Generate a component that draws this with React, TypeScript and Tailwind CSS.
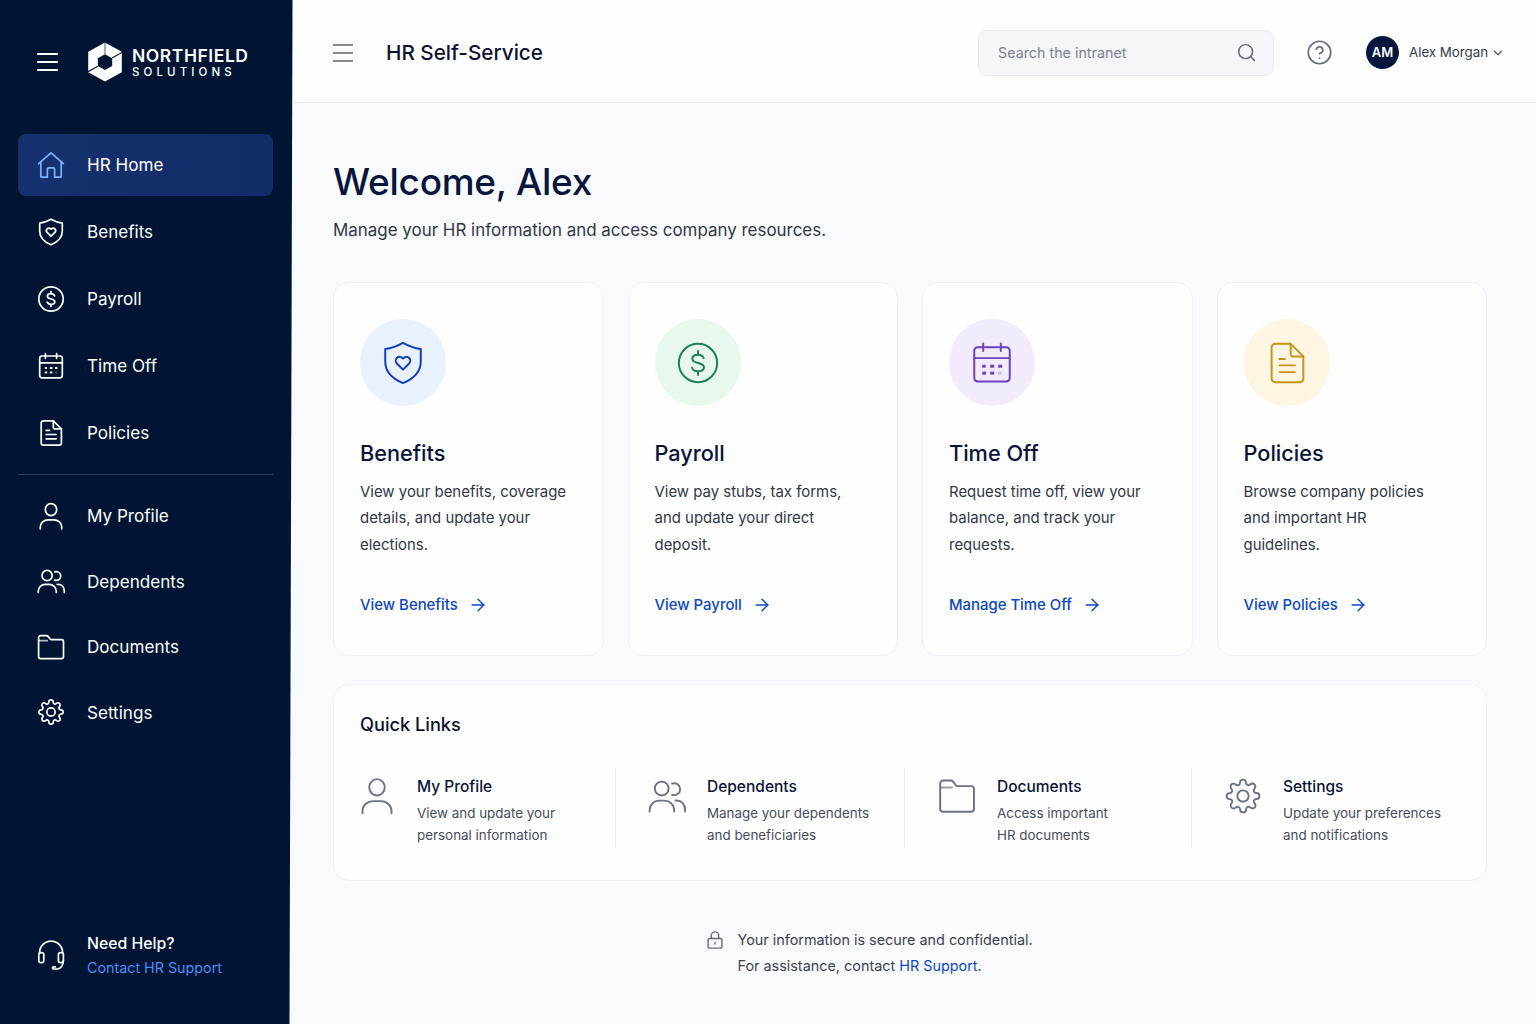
import type { ReactNode } from 'react'
import { ArrowRight, ChevronDown, CircleQuestionMark, Search } from 'lucide-react'

type IconProps = { className?: string; strokeWidth?: number }

function Icon({ className = 'size-7', strokeWidth = 1.7, children }: IconProps & { children: ReactNode }) {
  return (
    <svg
      viewBox="0 0 28 28"
      fill="none"
      stroke="currentColor"
      strokeWidth={strokeWidth}
      strokeLinecap="round"
      strokeLinejoin="round"
      className={`shrink-0 overflow-visible ${className}`}
    >
      {children}
    </svg>
  )
}

const HomeIcon = (props: IconProps) => (
  <Icon {...props}>
    <path d="M1.6 12.7 14 1.9l12.4 10.8" />
    <path d="M3.8 11v14.2a1 1 0 0 0 1 1h5.6v-8a1.4 1.4 0 0 1 1.4-1.4h4.4a1.4 1.4 0 0 1 1.4 1.4v8h5.6a1 1 0 0 0 1-1V11" />
  </Icon>
)

const ShieldIcon = (props: IconProps) => (
  <Icon {...props}>
    <path d="M14 1.2C10.5 3.2 6.5 4.6 2.7 5.1V13c0 6.5 4.6 11 11.3 13.8C20.7 24 25.3 19.5 25.3 13V5.1C21.5 4.6 17.5 3.2 14 1.2Z" />
    <path d="m14 18.2-3.9-3.9a2.5 2.5 0 0 1 0-3.5 2.4 2.4 0 0 1 3.5 0l.4.4.4-.4a2.4 2.4 0 0 1 3.5 0 2.5 2.5 0 0 1 0 3.5Z" />
  </Icon>
)

const DollarIcon = (props: IconProps) => (
  <Icon {...props}>
    <circle cx="14" cy="14" r="12.2" />
    <path d="M17.6 10.9c-.5-1.4-1.8-2.2-3.6-2.2-2.1 0-3.6 1-3.6 2.6 0 3.7 7.4 1.7 7.4 5.4 0 1.6-1.6 2.6-3.8 2.6-1.9 0-3.3-.8-3.8-2.3M14 6.4v2.3M14 19.3v2.3" />
  </Icon>
)

const CalendarIcon = (props: IconProps) => (
  <Icon {...props}>
    <rect x="2.7" y="4" width="22.6" height="21.8" rx="2.2" />
    <path d="M2.7 10.9h22.6M8.4 1.5v4.8M19.6 1.5v4.8" />
    <g fill="currentColor" stroke="none">
      <rect x="7.8" y="15.1" width="2.2" height="1.9" />
      <rect x="12.8" y="15.1" width="2.6" height="1.9" />
      <rect x="17.9" y="15.1" width="2.6" height="1.9" />
      <rect x="7.8" y="19.5" width="2.4" height="1.9" />
      <rect x="12.8" y="19.5" width="2.6" height="1.9" />
      <rect x="17.9" y="19.5" width="2.2" height="1.9" opacity="0.3" />
    </g>
  </Icon>
)

const DocumentIcon = (props: IconProps) => (
  <Icon {...props}>
    <path d="M16.3 1.8H6.4a2.2 2.2 0 0 0-2.2 2.2v20a2.2 2.2 0 0 0 2.2 2.2h15.8a2.2 2.2 0 0 0 2.2-2.2V9.8Z" />
    <path d="M16.3 1.8v6.8a1.2 1.2 0 0 0 1.2 1.2h6.9M9.2 11.4h3.4M9.2 15.5h9.9M9.2 19.8h9.9" />
  </Icon>
)

const UserIcon = (props: IconProps) => (
  <Icon {...props}>
    <ellipse cx="14" cy="7.6" rx="5.7" ry="6" />
    <path d="M3.3 26.8v-1.5c0-4.3 3.4-7.5 8-7.5h5.4c4.6 0 8 3.2 8 7.5v1.5" />
  </Icon>
)

const UsersIcon = (props: IconProps) => (
  <Icon {...props}>
    <circle cx="10.1" cy="8.5" r="5.1" />
    <path d="M1.2 25.5v-.9c0-4.2 3.2-7.2 7.2-7.2H12c4 0 7.3 3 7.3 7.2v.9" />
    <path d="M17.7 4.9c.5-.2 1-.3 1.6-.3a4.3 4.3 0 0 1 0 8.8c-.6 0-1.1-.1-1.6-.3M20.2 17.3h.9c3.7 0 6.2 2.9 6.2 6.6v1.6" />
  </Icon>
)

const FolderIcon = (props: IconProps) => (
  <Icon {...props}>
    <path d="M1.6 23.4V4.8a2.2 2.2 0 0 1 2.2-2.2h5.7c.7 0 1.2.3 1.6.8l2 2.7c.3.4.7.6 1.2.6h10.2a2 2 0 0 1 2 2v14.7a2.2 2.2 0 0 1-2.2 2.2H3.8a2.2 2.2 0 0 1-2.2-2.2Z" />
    <path d="M2 7.7h8.3" opacity="0.7" />
  </Icon>
)

const GearIcon = ({ className, strokeWidth = 1.7 }: IconProps) => (
  <Icon className={className} strokeWidth={strokeWidth * 0.91}>
    <g transform="translate(.8 .8) scale(1.1)">
      <circle cx="12" cy="12" r="3.8" />
      <path d="M19.4 15a1.65 1.65 0 0 0 .33 1.82l.06.06a2 2 0 0 1 0 2.83 2 2 0 0 1-2.83 0l-.06-.06a1.65 1.65 0 0 0-1.82-.33 1.65 1.65 0 0 0-1 1.51V21a2 2 0 0 1-2 2 2 2 0 0 1-2-2v-.09A1.65 1.65 0 0 0 9 19.4a1.65 1.65 0 0 0-1.82.33l-.06.06a2 2 0 0 1-2.83 0 2 2 0 0 1 0-2.83l.06-.06a1.65 1.65 0 0 0 .33-1.82 1.65 1.65 0 0 0-1.51-1H3a2 2 0 0 1-2-2 2 2 0 0 1 2-2h.09A1.65 1.65 0 0 0 4.6 9a1.65 1.65 0 0 0-.33-1.82l-.06-.06a2 2 0 0 1 0-2.83 2 2 0 0 1 2.83 0l.06.06a1.65 1.65 0 0 0 1.82.33H9a1.65 1.65 0 0 0 1-1.51V3a2 2 0 0 1 2-2 2 2 0 0 1 2 2v.09a1.65 1.65 0 0 0 1 1.51 1.65 1.65 0 0 0 1.82-.33l.06-.06a2 2 0 0 1 2.83 0 2 2 0 0 1 0 2.83l-.06.06a1.65 1.65 0 0 0-.33 1.82V9a1.65 1.65 0 0 0 1.51 1H21a2 2 0 0 1 2 2 2 2 0 0 1-2 2h-.09a1.65 1.65 0 0 0-1.51 1z" />
    </g>
  </Icon>
)

const HeadsetIcon = (props: IconProps) => (
  <Icon {...props}>
    <path d="M2.6 12v-.4a11.5 11.5 0 0 1 23 0v.4" />
    <rect x="1.8" y="11.6" width="5" height="10" rx="2.1" />
    <rect x="21.4" y="11.6" width="5" height="10" rx="2.1" />
    <path d="M26.2 19.8c0 4.8-2.6 8-6.2 8.2h-3.4a1.1 1.1 0 0 1 0-2.2h1.8" />
  </Icon>
)

const LockIcon = (props: IconProps) => (
  <Icon {...props}>
    <rect x="3.2" y="11.6" width="21.6" height="15" rx="3" />
    <path d="M8.2 11.6V7.2a5.8 5.8 0 0 1 11.6 0v4.4M14 18v2.4" />
  </Icon>
)

function LogoMark() {
  return (
    <svg viewBox="0 0 34 40" className="h-10 w-[34px] shrink-0">
      <path
        fill="#fff"
        fillRule="evenodd"
        d="M17 .4 33.8 9.8v20.4L17 39.6.2 30.2V9.8ZM17 12.2l-7.2 4.1v7.6l7.2 4.1 7.2-4.1v-7.6Z"
      />
      <path d="M24.2 16 34 10.4M9.8 24.2 0 29.8" stroke="#001434" strokeWidth="1.2" />
      <path d="M17 .4v11.8" stroke="#001434" strokeWidth="0.7" />
    </svg>
  )
}

const primaryNav = [
  { label: 'HR Home', icon: HomeIcon, active: true },
  { label: 'Benefits', icon: ShieldIcon },
  { label: 'Payroll', icon: DollarIcon },
  { label: 'Time Off', icon: CalendarIcon },
  { label: 'Policies', icon: DocumentIcon },
]

const secondaryNav = [
  { label: 'My Profile', icon: UserIcon },
  { label: 'Dependents', icon: UsersIcon },
  { label: 'Documents', icon: FolderIcon },
  { label: 'Settings', icon: GearIcon },
]

const cards = [
  {
    title: 'Benefits',
    lines: ['View your benefits, coverage', 'details, and update your', 'elections.'],
    link: 'View Benefits',
    icon: ShieldIcon,
    tone: 'bg-[#eaf1fe] text-[#0f3fb5]',
  },
  {
    title: 'Payroll',
    lines: ['View pay stubs, tax forms,', 'and update your direct', 'deposit.'],
    link: 'View Payroll',
    icon: DollarIcon,
    tone: 'bg-[#e9f8ec] text-[#1d7f57]',
  },
  {
    title: 'Time Off',
    lines: ['Request time off, view your', 'balance, and track your', 'requests.'],
    link: 'Manage Time Off',
    icon: CalendarIcon,
    tone: 'bg-[#f2ebfd] text-[#6a42bd]',
  },
  {
    title: 'Policies',
    lines: ['Browse company policies', 'and important HR', 'guidelines.'],
    link: 'View Policies',
    icon: DocumentIcon,
    tone: 'bg-[#fdf6e3] text-[#c7931a]',
  },
]

const quickLinks = [
  { title: 'My Profile', lines: ['View and update your', 'personal information'], icon: UserIcon, cell: '' },
  {
    title: 'Dependents',
    lines: ['Manage your dependents', 'and beneficiaries'],
    icon: UsersIcon,
    cell: 'border-l pl-[34px]',
  },
  {
    title: 'Documents',
    lines: ['Access important', 'HR documents'],
    icon: FolderIcon,
    cell: 'border-l pl-[35px]',
  },
  {
    title: 'Settings',
    lines: ['Update your preferences', 'and notifications'],
    icon: GearIcon,
    cell: 'border-l pl-[34px]',
  },
]

function Sidebar() {
  return (
    <aside className="flex w-[293px] shrink-0 flex-col bg-[#001434] text-white [clip-path:polygon(0_0,292.5px_0,289.5px_100%,0_100%)]">
      <div className="flex h-[123px] items-center pl-[37px]">
        <button className="flex w-[21px] flex-col gap-[6px]">
          <span className="h-[2px] rounded-full bg-white" />
          <span className="h-[2px] rounded-full bg-white" />
          <span className="h-[2px] rounded-full bg-white" />
        </button>
        <div className="ml-[30px] flex items-center gap-[10px]">
          <LogoMark />
          <div className="pt-[2px]">
            <div className="text-[17.5px] leading-[19px] font-semibold tracking-[0.55px]">NORTHFIELD</div>
            <div className="text-[11.5px] leading-[15px] font-medium tracking-[4.1px]">SOLUTIONS</div>
          </div>
        </div>
      </div>

      <nav className="mt-[11px] flex flex-col gap-[5.5px] px-[18px]">
        {primaryNav.map(({ label, icon: NavIcon, active }) => (
          <a
            key={label}
            className={`flex h-[61.5px] w-[255px] items-center gap-[22px] rounded-lg pl-[19px] text-[17.1px] ${
              active ? 'bg-linear-to-r from-[#15316f] to-[#112c66]' : ''
            }`}
          >
            <NavIcon className={active ? 'size-7 text-[#79b4fb]' : 'size-7'} />
            <span className="pt-[0.5px]">{label}</span>
          </a>
        ))}
      </nav>

      <hr className="mt-[10.5px] ml-[18px] w-[255px] border-t-[1.5px] border-[#2f405c]" />

      <nav className="mt-[8px] px-[18px]">
        {secondaryNav.map(({ label, icon: NavIcon }) => (
          <a key={label} className="flex h-[65.5px] items-center gap-[22px] pl-[19px] text-[17.1px]">
            <NavIcon />
            <span className="pt-[0.5px]">{label}</span>
          </a>
        ))}
      </nav>

      <div className="mt-auto flex items-center gap-[22px] pb-[44px] pl-[37px]">
        <HeadsetIcon className="mb-[2px] size-7" />
        <div>
          <div className="text-[15.8px] leading-6 font-medium">Need Help?</div>
          <a className="block text-[14.3px] leading-6 text-[#4b8df8]">Contact HR Support</a>
        </div>
      </div>
    </aside>
  )
}

function Header() {
  return (
    <header className="flex h-[103px] items-center border-b border-[#e6e9f0] bg-[#fefefe] pt-[3px] pl-[40px]">
      <button className="flex w-[20px] flex-col gap-[6px] pt-[1px]">
        <span className="h-[2px] bg-[#868a99]" />
        <span className="h-[2px] bg-[#868a99]" />
        <span className="h-[2px] bg-[#868a99]" />
      </button>
      <div className="ml-[33px] pt-[1px] text-[20.7px] leading-[30px] font-medium text-[#0b1230]">HR Self-Service</div>

      <div className="ml-auto flex h-[46px] w-[296px] items-center justify-between rounded-[9px] border border-[#e9ecf2] bg-[#f4f6fa] pr-[16px] pl-[19px]">
        <span className="text-[14.3px] text-[#7b8190]">Search the intranet</span>
        <Search className="size-[21px] text-[#62687a]" strokeWidth={1.7} />
      </div>
      <CircleQuestionMark className="ml-[32px] size-[27px] text-[#686d80]" strokeWidth={1.5} />
      <div className="ml-[33px] flex size-[33px] items-center justify-center rounded-full bg-[#03163e] text-[13px] font-semibold text-white">
        AM
      </div>
      <span className="ml-[10px] w-[80px] pt-px text-[13.3px] whitespace-nowrap text-[#343a4a]">Alex Morgan</span>
      <ChevronDown className="mr-[31px] ml-[2px] size-[14px] text-[#4b5163]" strokeWidth={2.1} />
    </header>
  )
}

function QuickLinks() {
  return (
    <section className="mt-[27.5px] h-[197px] rounded-2xl border border-[#eff1f6] bg-[#fefefe] pt-[26.5px] pl-[26px]">
      <h2 className="text-[18.2px] leading-[26px] font-medium text-[#071030]">Quick Links</h2>
      <div className="mt-[31px] grid h-[81px] grid-cols-[255px_289px_287px_1fr]">
        {quickLinks.map(({ title, lines, icon: LinkIcon, cell }) => (
          <a key={title} className={`flex border-[#eceef4] pt-[8px] ${cell}`}>
            <div className="w-[57px] shrink-0">
              <LinkIcon className="mt-[0.5px] -ml-[2px] size-[38px] text-[#6c7086]" strokeWidth={1.4} />
            </div>
            <div className="whitespace-nowrap">
              <div className="text-[15.5px] leading-[22px] font-medium text-[#0a1436]">{title}</div>
              <div className="mt-[4px] text-[13.4px] leading-[22.3px] text-[#464c5a]">
                {lines.map(line => (
                  <div key={line}>{line}</div>
                ))}
              </div>
            </div>
          </a>
        ))}
      </div>
    </section>
  )
}

export default function App() {
  return (
    <div className="flex h-[1024px] w-[1536px] overflow-hidden bg-[#f9fafe] font-['Inter','Liberation_Sans',sans-serif]">
      <Sidebar />
      <div className="min-w-0 flex-1">
        <Header />

        <main className="pr-[49px] pl-[40px]">
          <h1 className="pt-[55px] text-[37px] leading-[48px] font-medium tracking-[-0.25px] text-[#08153c]">
            Welcome, Alex
          </h1>
          <p className="mt-[12px] text-[16.95px] leading-[24px] text-[#303644]">
            Manage your HR information and access company resources.
          </p>

          {/* Service cards */}
          <section className="mt-[40px] grid grid-cols-4 gap-6">
            {cards.map(({ title, lines, link, icon: CardIcon, tone }) => (
              <article
                key={title}
                className="h-[374px] rounded-2xl border border-[#eff1f6] bg-[#fefefe] pt-[36px] pl-[26px] whitespace-nowrap"
              >
                <div className={`flex h-[87px] w-[86px] items-center justify-center rounded-full ${tone}`}>
                  <CardIcon className="size-[44px]" strokeWidth={1.25} />
                </div>
                <h2 className="mt-[33px] text-[21.7px] leading-[28px] font-medium text-[#071338]">{title}</h2>
                <div className="mt-[11.5px] text-[14.95px] leading-[26.5px] text-[#303746]">
                  {lines.map(line => (
                    <div key={line}>{line}</div>
                  ))}
                </div>
                <a className="mt-[35px] flex items-center gap-[10.5px] text-[14.9px] leading-[24px] font-medium text-[#0d48be]">
                  {link}
                  <ArrowRight className="size-[20px]" strokeWidth={1.7} />
                </a>
              </article>
            ))}
          </section>

          <QuickLinks />

          <div className="mt-[46px] ml-[373px] flex gap-[13.5px] text-[14.4px] leading-[26px] text-[#3c4250]">
            <LockIcon className="mt-[4px] size-[18px] text-[#666c7c]" strokeWidth={2.2} />
            <div>
              <p>Your information is secure and confidential.</p>
              <p>
                For assistance, contact <a className="text-[#0d48be]">HR Support</a>.
              </p>
            </div>
          </div>
        </main>
      </div>
    </div>
  )
}
